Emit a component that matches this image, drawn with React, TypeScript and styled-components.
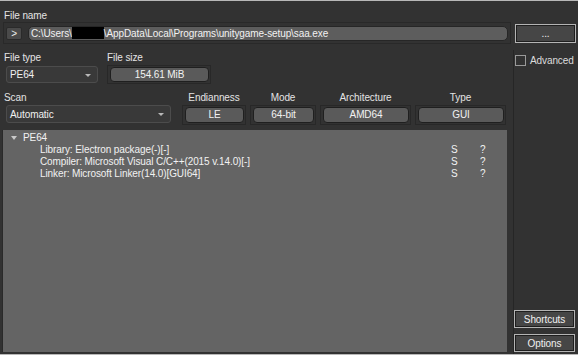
import React from "react";
import styled, { createGlobalStyle } from "styled-components";

const GlobalStyle = createGlobalStyle`
  html, body {
    margin: 0;
    padding: 0;
    background: #323232;
    overflow: hidden;
  }
`;

const Shell = styled.div`
  width: 578px;
  height: 355px;
  box-sizing: border-box;
  border-top: 1px solid #b8b8b8;
  border-bottom: 1px solid #b8b8b8;
  background: #323232;
  display: flex;
  flex-direction: column;
  font-family: "Liberation Sans", Arial, sans-serif;
  font-size: 10px;
  letter-spacing: -0.1px;
  color: #e4e4e4;
`;

const Label = styled.div<{ $center?: boolean }>`
  height: 12px;
  line-height: 12px;
  white-space: nowrap;
  text-align: ${(p) => (p.$center ? "center" : "left")};
`;

const TopLabel = styled(Label)`
  margin-top: 9px;
  padding-left: 4px;
`;

const PathRow = styled.div`
  display: flex;
  align-items: center;
  height: 22px;
`;

const PathFrame = styled.div`
  margin-left: 3px;
  width: 508px;
  height: 22px;
  box-sizing: border-box;
  border: 1px solid #292929;
  display: flex;
  align-items: center;
  gap: 6px;
  padding: 0 2px;
`;

const ArrowButton = styled.div`
  width: 16px;
  height: 13px;
  box-sizing: border-box;
  background: #4a4a4a;
  border: 1px solid #2a2a2a;
  border-radius: 2px;
  line-height: 11px;
  text-align: center;
  color: #eeeeee;
`;

const PathField = styled.div`
  flex: 1;
  height: 15px;
  box-sizing: border-box;
  background: #5d5d5d;
  border: 1px solid #262626;
  border-radius: 5px;
  padding-left: 2px;
  line-height: 13px;
  color: #f2f2f2;
  white-space: nowrap;
  overflow: hidden;
`;

const Redacted = styled.span`
  display: inline-block;
  width: 32px;
  height: 12px;
  background: #000;
  vertical-align: -2px;
`;

const PanelButton = styled.div<{ $h: number }>`
  width: 61px;
  height: ${(p) => p.$h}px;
  box-sizing: border-box;
  background: #464646;
  border: 1px solid #b4b4b4;
  box-shadow: inset 0 0 0 1px #1e1e1e;
  color: #f0f0f0;
  display: flex;
  align-items: center;
  justify-content: center;
`;

const BrowseButton = styled(PanelButton)`
  margin-left: 4px;
  align-items: flex-end;
  padding-bottom: 3px;
`;

const Body = styled.div`
  flex: 1;
  display: flex;
  margin-top: 6px;
  min-height: 0;
`;

const LeftColumn = styled.div`
  width: 513px;
  display: flex;
  flex-direction: column;
  padding-top: 2px;
`;

const InfoRow = styled.div`
  display: flex;
  margin-left: 4px;
`;

const Column = styled.div<{ $w: number }>`
  width: ${(p) => p.$w}px;
  display: flex;
  flex-direction: column;
`;

const Field = styled.div`
  display: flex;
  flex-direction: column;
`;

const Combo = styled.div<{ $w: number; $h: number; $top: number }>`
  position: relative;
  margin: ${(p) => p.$top}px 0 0 2px;
  width: ${(p) => p.$w}px;
  height: ${(p) => p.$h}px;
  box-sizing: border-box;
  background: #393939;
  border: 1px solid #4c4c4c;
  border-radius: 3px;
  padding-left: 3px;
  display: flex;
  align-items: center;
  color: #f0f0f0;

  &::after {
    content: "";
    position: absolute;
    right: 6px;
    top: 50%;
    margin-top: -1px;
    border-left: 3px solid transparent;
    border-right: 3px solid transparent;
    border-top: 3px solid #b8b8b8;
  }
`;

const Frame = styled.div<{ $top: number }>`
  margin-top: ${(p) => p.$top}px;
  box-sizing: border-box;
  border: 1px solid #282828;
  padding: 1px 1px 1px 2px;
`;

const ValueBox = styled.div<{ $h: number }>`
  height: ${(p) => p.$h}px;
  box-sizing: border-box;
  background: #5a5a5a;
  border: 1px solid #1f1f1f;
  border-radius: 4px;
  text-align: center;
  line-height: ${(p) => p.$h - 2}px;
  color: #f2f2f2;
`;

const ScanRow = styled.div`
  display: grid;
  grid-template-columns: 174px 64px 66px 91px 91px;
  column-gap: 4px;
  margin: 8px 0 0 4px;
`;

const Results = styled.div`
  flex: 1;
  margin: 5px 6px 2px 2px;
  background: #646464;
  border-left: 1px solid #2a2a2a;
  padding-top: 2px;
  color: #f2f2f2;
`;

const TreeRow = styled.div`
  display: grid;
  grid-template-columns: 448px 29px 1fr;
  height: 12px;
  line-height: 12px;
  white-space: nowrap;
`;

const TreeName = styled.div<{ $indent: number }>`
  padding-left: ${(p) => p.$indent}px;
  display: flex;
  align-items: center;
`;

const Twisty = styled.span`
  width: 0;
  height: 0;
  border-left: 3px solid transparent;
  border-right: 3px solid transparent;
  border-top: 4px solid #c8c8c8;
  margin-right: 6px;
`;

const RightPanel = styled.div`
  flex: 1;
  border-left: 1px solid #262626;
  display: flex;
  flex-direction: column;
  padding: 5px 0 2px 0;
  gap: 6px;
`;

const CheckRow = styled.div`
  display: flex;
  align-items: center;
  margin-left: 1px;
  color: #dcdcdc;
`;

const CheckBox = styled.div`
  width: 11px;
  height: 11px;
  box-sizing: border-box;
  border: 1px solid #9a9a9a;
  margin-right: 4px;
`;

const Spacer = styled.div`
  flex: 1;
`;

const scanFields = [
  { label: "Endianness", value: "LE" },
  { label: "Mode", value: "64-bit" },
  { label: "Architecture", value: "AMD64" },
  { label: "Type", value: "GUI" },
];

const detects = [
  "Library: Electron package(-)[-]",
  "Compiler: Microsoft Visual C/C++(2015 v.14.0)[-]",
  "Linker: Microsoft Linker(14.0)[GUI64]",
];

export default function App() {
  return (
    <>
      <GlobalStyle />
      <Shell>
        <TopLabel>File name</TopLabel>
        <PathRow>
          <PathFrame>
            <ArrowButton>&gt;</ArrowButton>
            <PathField>
              C:\Users\<Redacted />\AppData\Local\Programs\unitygame-setup\saa.exe
            </PathField>
          </PathFrame>
          <BrowseButton $h={19}>...</BrowseButton>
        </PathRow>
        <Body>
          <LeftColumn>
            <InfoRow>
              <Column $w={103}>
                <Label>File type</Label>
                <Combo $w={92} $h={17} $top={2}>PE64</Combo>
              </Column>
              <Column $w={104}>
                <Label>File size</Label>
                <Frame $top={1}>
                  <ValueBox $h={15}>154.61 MiB</ValueBox>
                </Frame>
              </Column>
            </InfoRow>
            <ScanRow>
              <Field>
                <Label>Scan</Label>
                <Combo $w={165} $h={18} $top={1}>Automatic</Combo>
              </Field>
              {scanFields.map((f) => (
                <Field key={f.label}>
                  <Label $center>{f.label}</Label>
                  <Frame $top={1}>
                    <ValueBox $h={16}>{f.value}</ValueBox>
                  </Frame>
                </Field>
              ))}
            </ScanRow>
            <Results>
              <TreeRow>
                <TreeName $indent={8}>
                  <Twisty />
                  PE64
                </TreeName>
              </TreeRow>
              {detects.map((d) => (
                <TreeRow key={d}>
                  <TreeName $indent={37}>{d}</TreeName>
                  <div>S</div>
                  <div>?</div>
                </TreeRow>
              ))}
            </Results>
          </LeftColumn>
          <RightPanel>
            <CheckRow>
              <CheckBox />
              Advanced
            </CheckRow>
            <Spacer />
            <PanelButton $h={18}>Shortcuts</PanelButton>
            <PanelButton $h={18}>Options</PanelButton>
          </RightPanel>
        </Body>
      </Shell>
    </>
  );
}
